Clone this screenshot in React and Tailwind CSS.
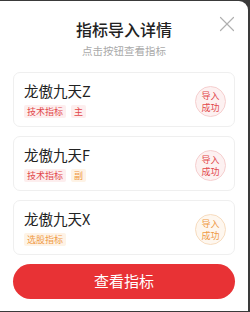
import { X } from "lucide-react";

const items = [
  {
    name: "龙傲九天Z",
    tags: [
      { label: "技术指标", tone: "red" },
      { label: "主", tone: "red" },
    ],
    tone: "red",
  },
  {
    name: "龙傲九天F",
    tags: [
      { label: "技术指标", tone: "red" },
      { label: "副", tone: "orange" },
    ],
    tone: "red",
  },
  {
    name: "龙傲九天X",
    tags: [{ label: "选股指标", tone: "orange" }],
    tone: "orange",
  },
];

const tagTone = {
  red: "bg-[#fdeeee] text-[#e2474b]",
  orange: "bg-[#fef3e6] text-[#ef9a45]",
};

const badgeTone = {
  red: "border-[#f6cfcf] bg-[#fdf1f1] text-[#e2474b]",
  orange: "border-[#f7dcbf] bg-[#fef7ef] text-[#ef9a45]",
};

function Tag({ label, tone }) {
  return (
    <span
      className={`flex h-[13px] items-center rounded-[2px] px-[3px] text-[9px] leading-none ${tagTone[tone]}`}
    >
      {label}
    </span>
  );
}

function IndicatorCard({ item }) {
  return (
    <div className="flex h-[55px] items-center justify-between rounded-[7px] border border-[#efefef] bg-white pl-[10px] pr-[8px]">
      <div className="flex flex-col">
        <p className="text-[14.5px] leading-[18px] text-[#222]">{item.name}</p>
        <div className="mt-[5px] flex gap-[5px]">
          {item.tags.map((tag) => (
            <Tag key={tag.label} {...tag} />
          ))}
        </div>
      </div>
      {/* import status stamp */}
      <div
        className={`mt-[4px] flex h-[31px] w-[31px] flex-col items-center justify-center rounded-full border text-[9px] leading-[12px] ${badgeTone[item.tone]}`}
      >
        <span>导入</span>
        <span>成功</span>
      </div>
    </div>
  );
}

export default function App() {
  return (
    <div
      className="h-[312px] w-[250px] overflow-hidden bg-[#3a3a3a] pt-px pr-[2px]"
      style={{ fontFamily: '"Noto Sans CJK SC", "Noto Sans", sans-serif' }}
    >
      <div className="relative h-[310px] rounded-tr-[9px] bg-white px-[13px]">
        <button className="absolute right-[8px] top-[10px] text-[#b0b0b0]">
          <X size={26} strokeWidth={1.1} />
        </button>
        {/* header */}
        <div className="flex flex-col items-center pt-[17px]">
          <h1 className="text-[16px] font-medium leading-[22px] text-[#222]">
            指标导入详情
          </h1>
          <p className="mt-[4px] text-[10.5px] leading-[14px] text-[#aaa]">
            点击按钮查看指标
          </p>
        </div>
        {/* list */}
        <div className="mt-[14px] flex flex-col gap-[9px]">
          {items.map((item) => (
            <IndicatorCard key={item.name} item={item} />
          ))}
        </div>
        <button className="mt-[9px] flex h-[35px] w-full items-center justify-center rounded-full bg-[#e83235] text-[15px] text-white">
          查看指标
        </button>
      </div>
    </div>
  );
}
